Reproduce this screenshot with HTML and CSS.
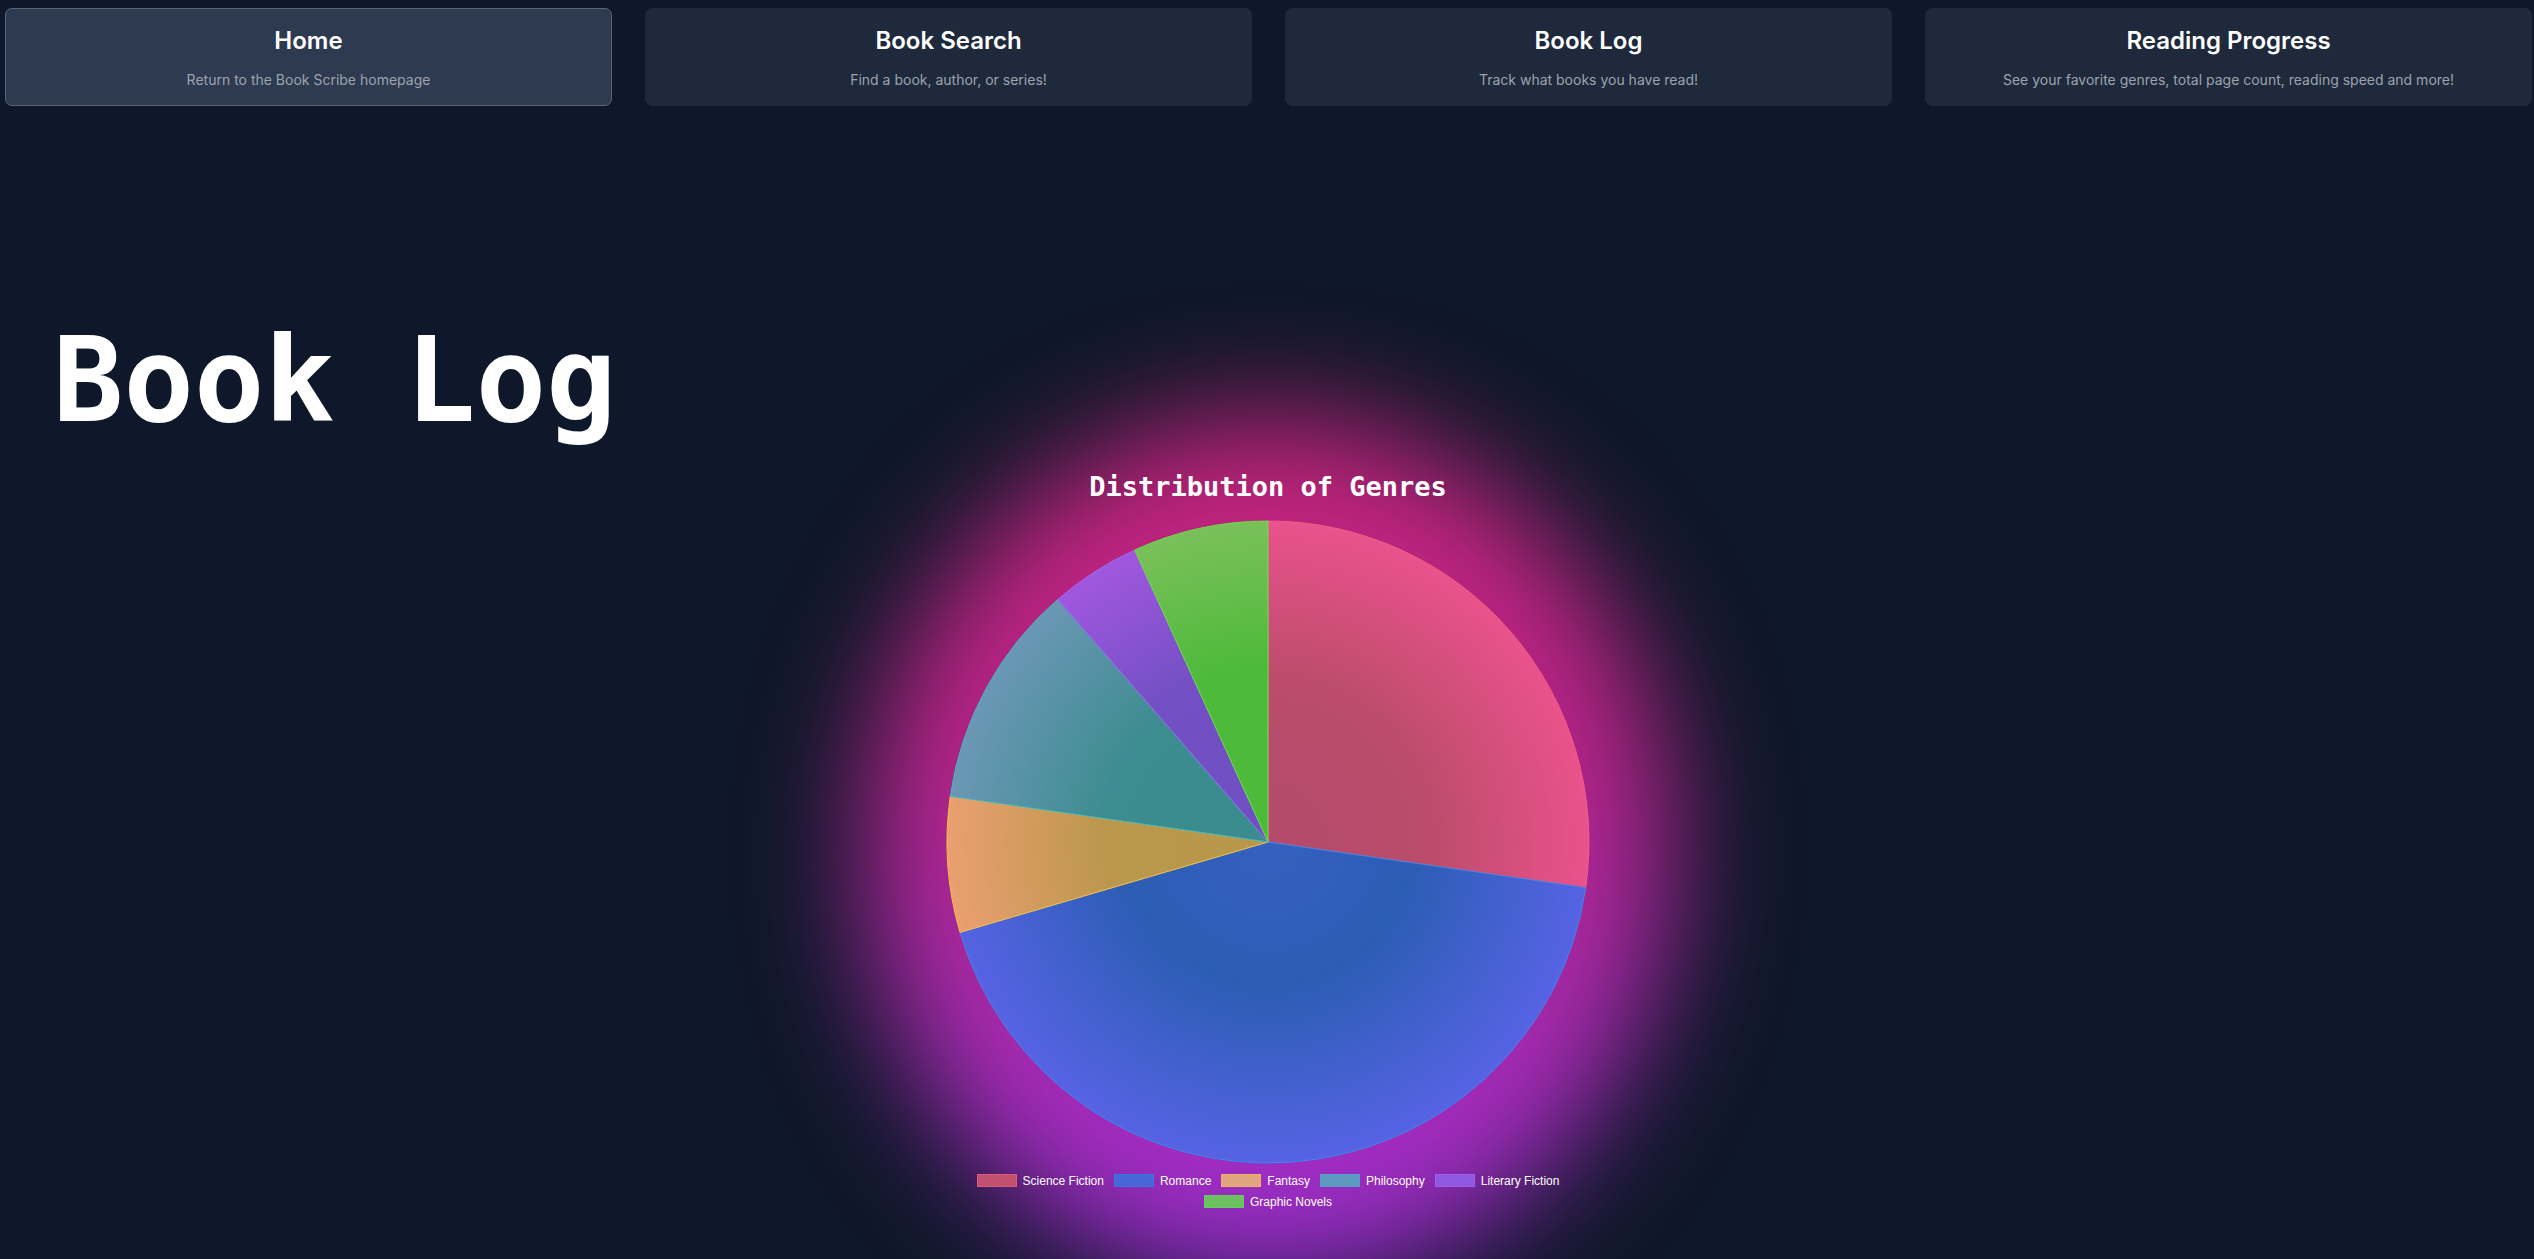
FILE: index.html
```html
<!DOCTYPE html>
<html lang="en">
<head>
<meta charset="utf-8">
<title>Book Log</title>
<link rel="stylesheet" href="styles.css">
</head>
<body>
  <nav class="nav">
    <a class="nav-card nav-card--active" href="#">
      <span class="nav-title">Home</span>
      <span class="nav-sub">Return to the Book Scribe homepage</span>
    </a>
    <a class="nav-card" href="#">
      <span class="nav-title">Book Search</span>
      <span class="nav-sub">Find a book, author, or series!</span>
    </a>
    <a class="nav-card" href="#">
      <span class="nav-title">Book Log</span>
      <span class="nav-sub">Track what books you have read!</span>
    </a>
    <a class="nav-card" href="#">
      <span class="nav-title">Reading Progress</span>
      <span class="nav-sub">See your favorite genres, total page count, reading speed and more!</span>
    </a>
  </nav>

  <h1 class="page-title">Book Log</h1>

  <section class="chart">
    <div class="chart-glow"></div>
    <h2 class="chart-title">Distribution of Genres</h2>
    <svg class="pie" width="644" height="644" viewBox="0 0 644 644">
      <defs>
        <radialGradient id="g-sf" gradientUnits="userSpaceOnUse" cx="322" cy="322" r="321">
          <stop offset="0" stop-color="#b44a6c"/>
          <stop offset="0.5" stop-color="#bb4c6b"/>
          <stop offset="1" stop-color="#ea528b"/>
        </radialGradient>
        <radialGradient id="g-ro" gradientUnits="userSpaceOnUse" cx="322" cy="322" r="321">
          <stop offset="0" stop-color="#3560c0"/>
          <stop offset="0.45" stop-color="#2c5db4"/>
          <stop offset="1" stop-color="#5663e4"/>
        </radialGradient>
        <radialGradient id="g-fa" gradientUnits="userSpaceOnUse" cx="322" cy="322" r="321">
          <stop offset="0" stop-color="#b7984a"/>
          <stop offset="0.5" stop-color="#ba974c"/>
          <stop offset="1" stop-color="#ea9f70"/>
        </radialGradient>
        <radialGradient id="g-ph" gradientUnits="userSpaceOnUse" cx="322" cy="322" r="321">
          <stop offset="0" stop-color="#3a8c8e"/>
          <stop offset="0.5" stop-color="#3c8c90"/>
          <stop offset="1" stop-color="#6b97b5"/>
        </radialGradient>
        <radialGradient id="g-lf" gradientUnits="userSpaceOnUse" cx="322" cy="322" r="321">
          <stop offset="0" stop-color="#6e4fc0"/>
          <stop offset="0.55" stop-color="#7350c4"/>
          <stop offset="1" stop-color="#a157de"/>
        </radialGradient>
        <radialGradient id="g-gn" gradientUnits="userSpaceOnUse" cx="322" cy="322" r="321">
          <stop offset="0" stop-color="#4cba38"/>
          <stop offset="0.55" stop-color="#4eba3a"/>
          <stop offset="1" stop-color="#7ac05a"/>
        </radialGradient>
      </defs>
      <path d="M322,322 L322,1 A321,321 0 0 1 639.73,367.68 Z" fill="url(#g-sf)" stroke="#ee5f86" stroke-width="1"/>
      <path d="M322,322 L639.73,367.68 A321,321 0 0 1 13.99,412.41 Z" fill="url(#g-ro)" stroke="#3d86e6" stroke-width="1"/>
      <path d="M322,322 L13.99,412.41 A321,321 0 0 1 4.26,276.32 Z" fill="url(#g-fa)" stroke="#f6c040" stroke-width="1"/>
      <path d="M322,322 L4.26,276.32 A321,321 0 0 1 111.79,79.40 Z" fill="url(#g-ph)" stroke="#3fb8c4" stroke-width="1"/>
      <path d="M322,322 L111.79,79.40 A321,321 0 0 1 188.65,30.00 Z" fill="url(#g-lf)" stroke="#9a6af4" stroke-width="1"/>
      <path d="M322,322 L188.65,30.00 A321,321 0 0 1 322,1 Z" fill="url(#g-gn)" stroke="#66e04a" stroke-width="1"/>
    </svg>
    <ul class="legend">
      <li class="legend-item"><span class="swatch swatch--sf"></span>Science Fiction</li>
      <li class="legend-item"><span class="swatch swatch--ro"></span>Romance</li>
      <li class="legend-item"><span class="swatch swatch--fa"></span>Fantasy</li>
      <li class="legend-item"><span class="swatch swatch--ph"></span>Philosophy</li>
      <li class="legend-item"><span class="swatch swatch--lf"></span>Literary Fiction</li>
      <li class="legend-item"><span class="swatch swatch--gn"></span>Graphic Novels</li>
    </ul>
  </section>
</body>
</html>
```
FILE: styles.css
```css
html, body {
  margin: 0;
  padding: 0;
  overflow: hidden;
  background: #0f172a;
}

body {
  font-family: Inter, "Noto Sans", "Liberation Sans", sans-serif;
  color: #ffffff;
  min-height: 100vh;
}

.nav {
  display: flex;
  gap: 33px;
  padding: 8px 0 0 5px;
}

.nav-card {
  flex: 0 0 607px;
  box-sizing: border-box;
  height: 98px;
  display: flex;
  flex-direction: column;
  align-items: center;
  padding: 16px 16px 15px;
  background: #1e293b;
  border: 1px solid #1e293b;
  border-radius: 7px;
  text-decoration: none;
}

.nav-card--active {
  background: #2e3a4f;
  border-color: #56657c;
}

.nav-title {
  font-size: 24px;
  line-height: 32px;
  font-weight: 600;
  color: #ffffff;
}

.nav-sub {
  margin-top: 13px;
  font-size: 14px;
  line-height: 20px;
  color: #9ca3af;
}

.page-title {
  margin: 205px 0 0 53px;
  font-family: "DejaVu Sans Mono", "Liberation Mono", monospace;
  font-size: 117px;
  line-height: 140px;
  font-weight: 700;
  color: #ffffff;
}

.chart {
  position: relative;
  width: 700px;
  margin: 20px auto 0;
  left: 1px;
  display: flex;
  flex-direction: column;
  align-items: center;
}

.chart-glow {
  position: absolute;
  left: 50%;
  top: -55px;
  width: 810px;
  height: 870px;
  margin-left: -405px;
  border-radius: 50%;
  background: linear-gradient(180deg, #c8237a 0%, #b8248a 40%, #9a2fd6 100%);
  filter: blur(58px);
  z-index: 0;
}

.chart-title {
  position: relative;
  z-index: 1;
  margin: 0;
  font-family: "DejaVu Sans Mono", "Liberation Mono", monospace;
  font-size: 27px;
  line-height: 32px;
  font-weight: 700;
  color: #ffffff;
}

.pie {
  position: relative;
  z-index: 1;
  display: block;
  margin-top: 17px;
}

.legend {
  position: relative;
  z-index: 1;
  width: 650px;
  margin: 6px 0 0;
  padding: 0;
  list-style: none;
  display: flex;
  flex-wrap: wrap;
  justify-content: center;
  column-gap: 10px;
}

.legend-item {
  display: flex;
  align-items: center;
  height: 21px;
  font-family: "Liberation Sans", Arial, sans-serif;
  font-size: 12px;
  color: #ffffff;
}

.swatch {
  box-sizing: border-box;
  width: 40px;
  height: 13px;
  margin-right: 6px;
  border: 1px solid;
}

.swatch--sf { background: #c2506f; border-color: #e0587a; }
.swatch--ro { background: #4766d8; border-color: #3478e0; }
.swatch--fa { background: #e0a57e; border-color: #f0b060; }
.swatch--ph { background: #5e9ac0; border-color: #4e9fcf; }
.swatch--lf { background: #8e58df; border-color: #9b60f0; }
.swatch--gn { background: #6cc060; border-color: #5ed060; }
```
